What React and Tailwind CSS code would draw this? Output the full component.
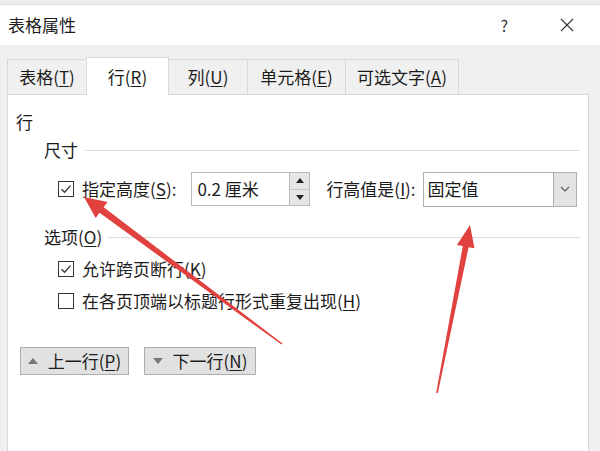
import React from 'react';

const Key = ({ children }) => <span className="underline underline-offset-2">{children}</span>;

const CheckBox = ({ checked }) => (
  <span className="w-[16px] h-[16px] border border-[#333] bg-white flex items-center justify-center shrink-0">
    {checked && (
      <svg width="12" height="12" viewBox="0 0 12 12">
        <path d="M1.5 6.2 L4.6 9.2 L10.6 2.6" fill="none" stroke="#333" strokeWidth="1.3" />
      </svg>
    )}
  </span>
);

const tabs = [
  { label: '表格', key: 'T', w: 'w-[79px]' },
  { label: '行', key: 'R', w: 'w-[83px]', active: true },
  { label: '列', key: 'U', w: 'w-[78px]' },
  { label: '单元格', key: 'E', w: 'w-[98px]' },
  { label: '可选文字', key: 'A', w: 'w-[114px]', last: true },
];

export default function App() {
  return (
    <div className="w-[600px] h-[451px] bg-[#f0f0f0] overflow-hidden relative text-[17px] text-[#1c1c1c] font-['Noto_Sans_CJK_SC',sans-serif]">
      <div className="h-[5px] bg-[#ececec] border-b border-[#e0e0e0]" />

      {/* title bar */}
      <div className="h-[40px] bg-white flex items-center pl-[8px]">
        <span className="leading-[20px]">表格属性</span>
        <span className="ml-auto mr-[52px] text-[16px] text-[#333]">?</span>
        <svg className="mr-[26px]" width="14" height="14" viewBox="0 0 14 14">
          <path d="M1 1 L13 13 M13 1 L1 13" stroke="#333" strokeWidth="1.1" />
        </svg>
      </div>

      {/* tabs */}
      <div className="pl-[7px] pt-[12px] flex items-end h-[49px]">
        {tabs.map((t) => (
          <div
            key={t.key}
            className={
              t.active
                ? `${t.w} h-[38px] -mb-px bg-white border-l border-t border-r border-[#d9d9d9] relative z-10 flex items-center justify-center leading-[20px]`
                : `${t.w} h-[35px] border-t border-[#d9d9d9] ${t.last ? 'border-r' : ''} ${t.key === 'U' ? '' : 'border-l'} flex items-center justify-center leading-[20px]`
            }
          >
            {t.label}(<Key>{t.key}</Key>)
          </div>
        ))}
      </div>

      {/* panel */}
      <div className="ml-[7px] w-[582px] h-[370px] bg-white border border-[#d9d9d9] pt-[17px]">
        <div className="pl-[8px] h-[20px] leading-[20px]">行</div>

        <div className="mt-[8px] pl-[36px] pr-[8px] h-[20px] flex items-center gap-[7px]">
          <span className="leading-[20px]">尺寸</span>
          <span className="flex-1 h-px bg-[#dcdcdc]" />
        </div>

        <div className="mt-[12px] pl-[50px] h-[34px] flex items-center">
          <CheckBox checked />
          <span className="ml-[8px] leading-[20px]">
            指定高度(<Key>S</Key>):
          </span>
          <div className="ml-[15px] flex h-[34px] border border-[#b9b9b9]">
            <div className="w-[97px] px-[5px] flex items-center leading-[20px]">0.2 厘米</div>
            <div className="w-[20px] flex flex-col border-l border-[#b9b9b9]">
              <div className="flex-1 bg-[#e6e6e6] border-b border-[#c8c8c8] flex items-center justify-center">
                <svg width="8" height="5" viewBox="0 0 8 5"><path d="M0 5 L4 0 L8 5 Z" fill="#222" /></svg>
              </div>
              <div className="flex-1 bg-[#e6e6e6] flex items-center justify-center">
                <svg width="8" height="5" viewBox="0 0 8 5"><path d="M0 0 L4 5 L8 0 Z" fill="#222" /></svg>
              </div>
            </div>
          </div>
          <span className="ml-[16px] leading-[20px]">
            行高值是(<Key>I</Key>):
          </span>
          <div className="ml-[7px] w-[154px] h-[35px] flex border border-[#b0b0b0]">
            <div className="flex-1 px-[4px] flex items-center leading-[20px]">固定值</div>
            <div className="w-[23px] bg-[#e3e3e3] border-l border-[#adadad] flex items-center justify-center">
              <svg width="10" height="6" viewBox="0 0 10 6"><path d="M1 1 L5 5 L9 1" fill="none" stroke="#555" strokeWidth="1.1" /></svg>
            </div>
          </div>
        </div>

        <div className="mt-[21px] pl-[36px] pr-[8px] h-[20px] flex items-center gap-[6px]">
          <span className="leading-[20px]">
            选项(<Key>O</Key>)
          </span>
          <span className="flex-1 h-px bg-[#dcdcdc]" />
        </div>

        <div className="mt-[10px] pl-[50px] h-[24px] flex items-center">
          <CheckBox checked />
          <span className="ml-[8px] leading-[20px]">
            允许跨页断行(<Key>K</Key>)
          </span>
        </div>

        <div className="mt-[8px] pl-[50px] h-[24px] flex items-center">
          <CheckBox />
          <span className="ml-[8px] leading-[20px]">
            在各页顶端以标题行形式重复出现(<Key>H</Key>)
          </span>
        </div>

        <div className="mt-[34px] pl-[12px] flex gap-[15px]">
          <button className="w-[109px] h-[28px] bg-[#e1e1e1] border border-[#adadad] flex items-center justify-center gap-[10px] leading-[20px]">
            <svg width="10" height="6" viewBox="0 0 10 6"><path d="M0 6 L5 0 L10 6 Z" fill="#777" /></svg>
            <span>上一行(<Key>P</Key>)</span>
          </button>
          <button className="w-[112px] h-[28px] bg-[#e1e1e1] border border-[#adadad] flex items-center justify-center gap-[10px] leading-[20px]">
            <svg width="10" height="6" viewBox="0 0 10 6"><path d="M0 0 L5 6 L10 0 Z" fill="#777" /></svg>
            <span>下一行(<Key>N</Key>)</span>
          </button>
        </div>
      </div>

      {/* red annotation arrows */}
      <svg className="absolute inset-0 pointer-events-none" width="600" height="451" viewBox="0 0 600 451">
        <polygon
          points="84,197 107.5,202 103.7,207.2 282.5,343.4 281.5,344.6 99.5,212.8 95.7,218"
          fill="#e2423f"
        />
        <polygon
          points="470,225 474.5,248.3 468.6,247.2 437.8,393.2 436.2,392.8 462.8,246 456.9,244.9"
          fill="#e2423f"
        />
      </svg>
    </div>
  );
}
